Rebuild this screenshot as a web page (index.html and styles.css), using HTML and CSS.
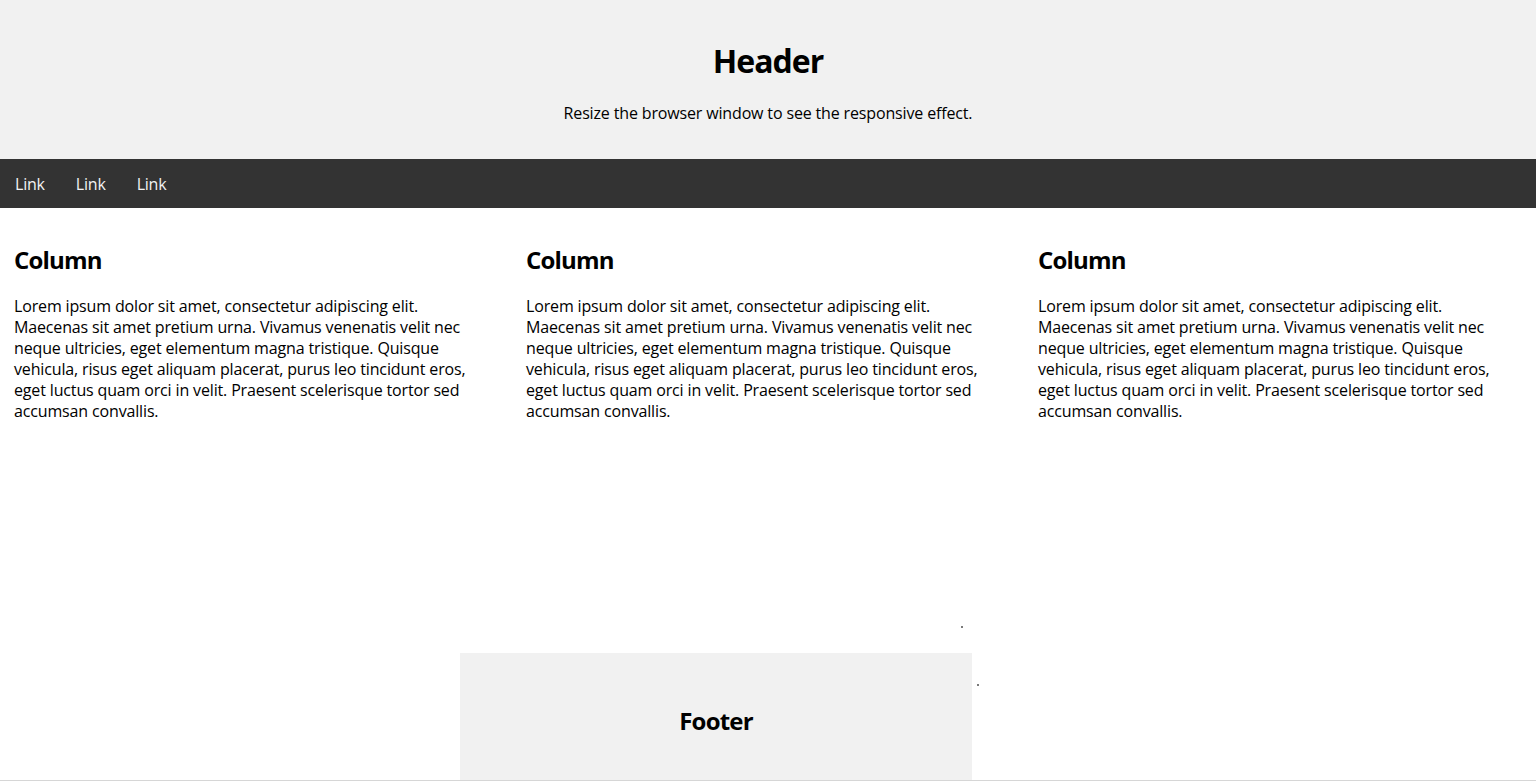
FILE: index.html
```html
<!DOCTYPE html>
<html lang="en">
<head>
<meta charset="utf-8">
<title>Responsive Layout</title>
<link rel="stylesheet" href="styles.css">
</head>
<body>
<div class="page">
  <header class="header">
    <h1>Header</h1>
    <p>Resize the browser window to see the responsive effect.</p>
  </header>
  <nav class="topnav">
    <a href="#">Link</a>
    <a href="#">Link</a>
    <a href="#">Link</a>
  </nav>
  <main class="row">
    <div class="column">
      <h2>Column</h2>
      <p>Lorem ipsum dolor sit amet, consectetur adipiscing elit. Maecenas sit amet pretium urna. Vivamus venenatis velit nec neque ultricies, eget elementum magna tristique. Quisque vehicula, risus eget aliquam placerat, purus leo tincidunt eros, eget luctus quam orci in velit. Praesent scelerisque tortor sed accumsan convallis.</p>
    </div>
    <div class="column">
      <h2>Column</h2>
      <p>Lorem ipsum dolor sit amet, consectetur adipiscing elit. Maecenas sit amet pretium urna. Vivamus venenatis velit nec neque ultricies, eget elementum magna tristique. Quisque vehicula, risus eget aliquam placerat, purus leo tincidunt eros, eget luctus quam orci in velit. Praesent scelerisque tortor sed accumsan convallis.</p>
    </div>
    <div class="column">
      <h2>Column</h2>
      <p>Lorem ipsum dolor sit amet, consectetur adipiscing elit. Maecenas sit amet pretium urna. Vivamus venenatis velit nec neque ultricies, eget elementum magna tristique. Quisque vehicula, risus eget aliquam placerat, purus leo tincidunt eros, eget luctus quam orci in velit. Praesent scelerisque tortor sed accumsan convallis.</p>
    </div>
  </main>
  <div class="footer-row">
    <footer class="footer">
      <h2>Footer</h2>
    </footer>
    <span class="speck speck-a"></span>
    <span class="speck speck-b"></span>
  </div>
  <div class="frame-edge"></div>
</div>
</body>
</html>
```
FILE: styles.css
```css
* {
  box-sizing: border-box;
}

html, body {
  margin: 0;
  padding: 0;
  height: 100%;
  overflow: hidden;
  background: #ffffff;
}

body {
  font-family: "Open Sans", "Noto Sans CJK KR", sans-serif;
  font-size: 16px;
  line-height: 21px;
  letter-spacing: -0.15px;
  color: #000000;
}

.page {
  display: flex;
  flex-direction: column;
  height: 781px;
}

.header {
  height: 159px;
  padding: 20px;
  text-align: center;
  background: #f1f1f1;
}

.header h1 {
  margin: 20px 0 21px;
  font-size: 32px;
  line-height: 42px;
  font-weight: 700;
  letter-spacing: -1px;
}

.header p {
  margin: 0;
}

.topnav {
  display: flex;
  height: 49px;
  background: #333333;
}

.topnav a {
  display: block;
  padding: 15px 16px 13px 15px;
  color: #f2f2f2;
  text-decoration: none;
  letter-spacing: -0.2px;
}

.row {
  display: grid;
  grid-template-columns: repeat(3, 1fr);
  height: 445px;
}

.column {
  padding: 16px 16px 15px 14px;
}

.column h2,
.footer h2 {
  margin: 20px 0;
  font-size: 24px;
  line-height: 32px;
  font-weight: 700;
  letter-spacing: -0.8px;
}

.column p {
  margin: 0;
}

.footer-row {
  position: relative;
  height: 127px;
  display: flex;
}

.footer {
  margin-left: 460px;
  width: 512px;
  height: 127px;
  padding-top: 32px;
  background: #f1f1f1;
  text-align: center;
  overflow: hidden;
}

.speck {
  position: absolute;
  width: 2px;
  height: 2px;
  background: #7a7a7a;
}

.speck-a {
  left: 961px;
  top: -27px;
}

.speck-b {
  left: 977px;
  top: 31px;
}

.frame-edge {
  height: 1px;
  background: #d6d6d6;
}
```
